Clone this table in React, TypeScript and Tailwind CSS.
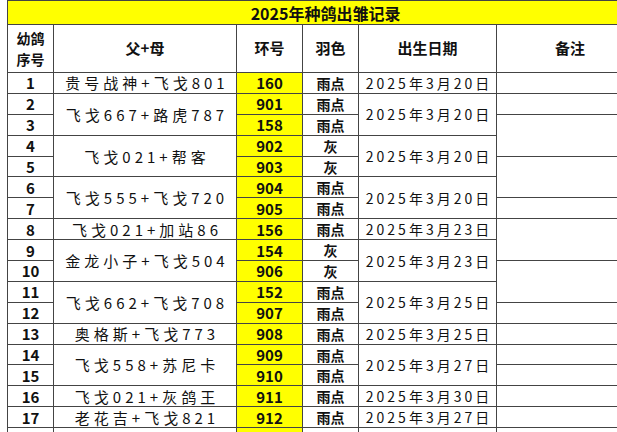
type Chick = {
  no: number;
  ring: string;
  color: string;
};

type Group = {
  parents: string;
  date: string;
  chicks: Chick[];
};

const groups: Group[] = [
  { parents: '贵号战神+飞戈801', date: '2025年3月20日', chicks: [{ no: 1, ring: '160', color: '雨点' }] },
  {
    parents: '飞戈667+路虎787',
    date: '2025年3月20日',
    chicks: [
      { no: 2, ring: '901', color: '雨点' },
      { no: 3, ring: '158', color: '雨点' },
    ],
  },
  {
    parents: '飞戈021+帮客',
    date: '2025年3月20日',
    chicks: [
      { no: 4, ring: '902', color: '灰' },
      { no: 5, ring: '903', color: '灰' },
    ],
  },
  {
    parents: '飞戈555+飞戈720',
    date: '2025年3月20日',
    chicks: [
      { no: 6, ring: '904', color: '雨点' },
      { no: 7, ring: '905', color: '雨点' },
    ],
  },
  { parents: '飞戈021+加站86', date: '2025年3月23日', chicks: [{ no: 8, ring: '156', color: '雨点' }] },
  {
    parents: '金龙小子+飞戈504',
    date: '2025年3月23日',
    chicks: [
      { no: 9, ring: '154', color: '灰' },
      { no: 10, ring: '906', color: '灰' },
    ],
  },
  {
    parents: '飞戈662+飞戈708',
    date: '2025年3月25日',
    chicks: [
      { no: 11, ring: '152', color: '雨点' },
      { no: 12, ring: '907', color: '雨点' },
    ],
  },
  { parents: '奥格斯+飞戈773', date: '2025年3月25日', chicks: [{ no: 13, ring: '908', color: '雨点' }] },
  {
    parents: '飞戈558+苏尼卡',
    date: '2025年3月27日',
    chicks: [
      { no: 14, ring: '909', color: '雨点' },
      { no: 15, ring: '910', color: '雨点' },
    ],
  },
  { parents: '飞戈021+灰鸽王', date: '2025年3月30日', chicks: [{ no: 16, ring: '911', color: '雨点' }] },
  { parents: '老花吉+飞戈821', date: '2025年3月27日', chicks: [{ no: 17, ring: '912', color: '雨点' }] },
];

// the 备注 column is merged differently from the rest of the sheet
const noteSpans: Record<number, number> = { 3: 2, 4: 0, 5: 2, 6: 0, 8: 2, 9: 0, 10: 2, 11: 0 };

const cell = 'border border-[#444] p-0 text-center align-middle';

export default function App() {
  return (
    <div className="h-[432px] w-[617px] overflow-hidden bg-white pl-[7px] font-['Noto_Sans_CJK_SC',sans-serif] text-[#111]">
      <table className="w-[636px] table-fixed border-collapse">
        <colgroup>
          <col className="w-[46px]" />
          <col className="w-[183px]" />
          <col className="w-[66px]" />
          <col className="w-[56px]" />
          <col className="w-[138px]" />
          <col className="w-[147px]" />
        </colgroup>
        <tbody>
          <tr className="h-[24px]">
            <td colSpan={6} className={`${cell} bg-[#ffff00] text-[16px] font-bold leading-none`}>
              2025年种鸽出雏记录
            </td>
          </tr>
          <tr className="h-[48px] text-[15px] font-bold">
            <td className={`${cell} text-[14px] leading-[21px]`}>
              幼鸽
              <br />
              序号
            </td>
            <td className={cell}>父+母</td>
            <td className={cell}>环号</td>
            <td className={cell}>羽色</td>
            <td className={cell}>出生日期</td>
            <td className={cell}>备注</td>
          </tr>
          {groups.flatMap((g) =>
            g.chicks.map((c, i) => {
              const span = noteSpans[c.no] ?? 1;
              return (
                <tr key={c.no} className="h-[20.9px] leading-none">
                  <td className={`${cell} text-[15px] font-bold`}>{c.no}</td>
                  {i === 0 && (
                    <td
                      rowSpan={g.chicks.length}
                      className={`${cell} pl-[4px] text-[15px] tracking-[4px]`}
                    >
                      {g.parents}
                    </td>
                  )}
                  <td className={`${cell} bg-[#ffff00] text-[15px] font-bold`}>{c.ring}</td>
                  <td className={`${cell} text-[14px] font-bold`}>{c.color}</td>
                  {i === 0 && (
                    <td
                      rowSpan={g.chicks.length}
                      className={`${cell} pl-[3px] text-[14px] tracking-[3px]`}
                    >
                      {g.date}
                    </td>
                  )}
                  {span > 0 && <td rowSpan={span} className={cell}></td>}
                </tr>
              );
            }),
          )}
          <tr className="h-[20.9px]">
            <td className={cell}></td>
            <td className={cell}></td>
            <td className={`${cell} bg-[#ffff00]`}></td>
            <td className={cell}></td>
            <td className={cell}></td>
            <td className={cell}></td>
          </tr>
        </tbody>
      </table>
    </div>
  );
}
